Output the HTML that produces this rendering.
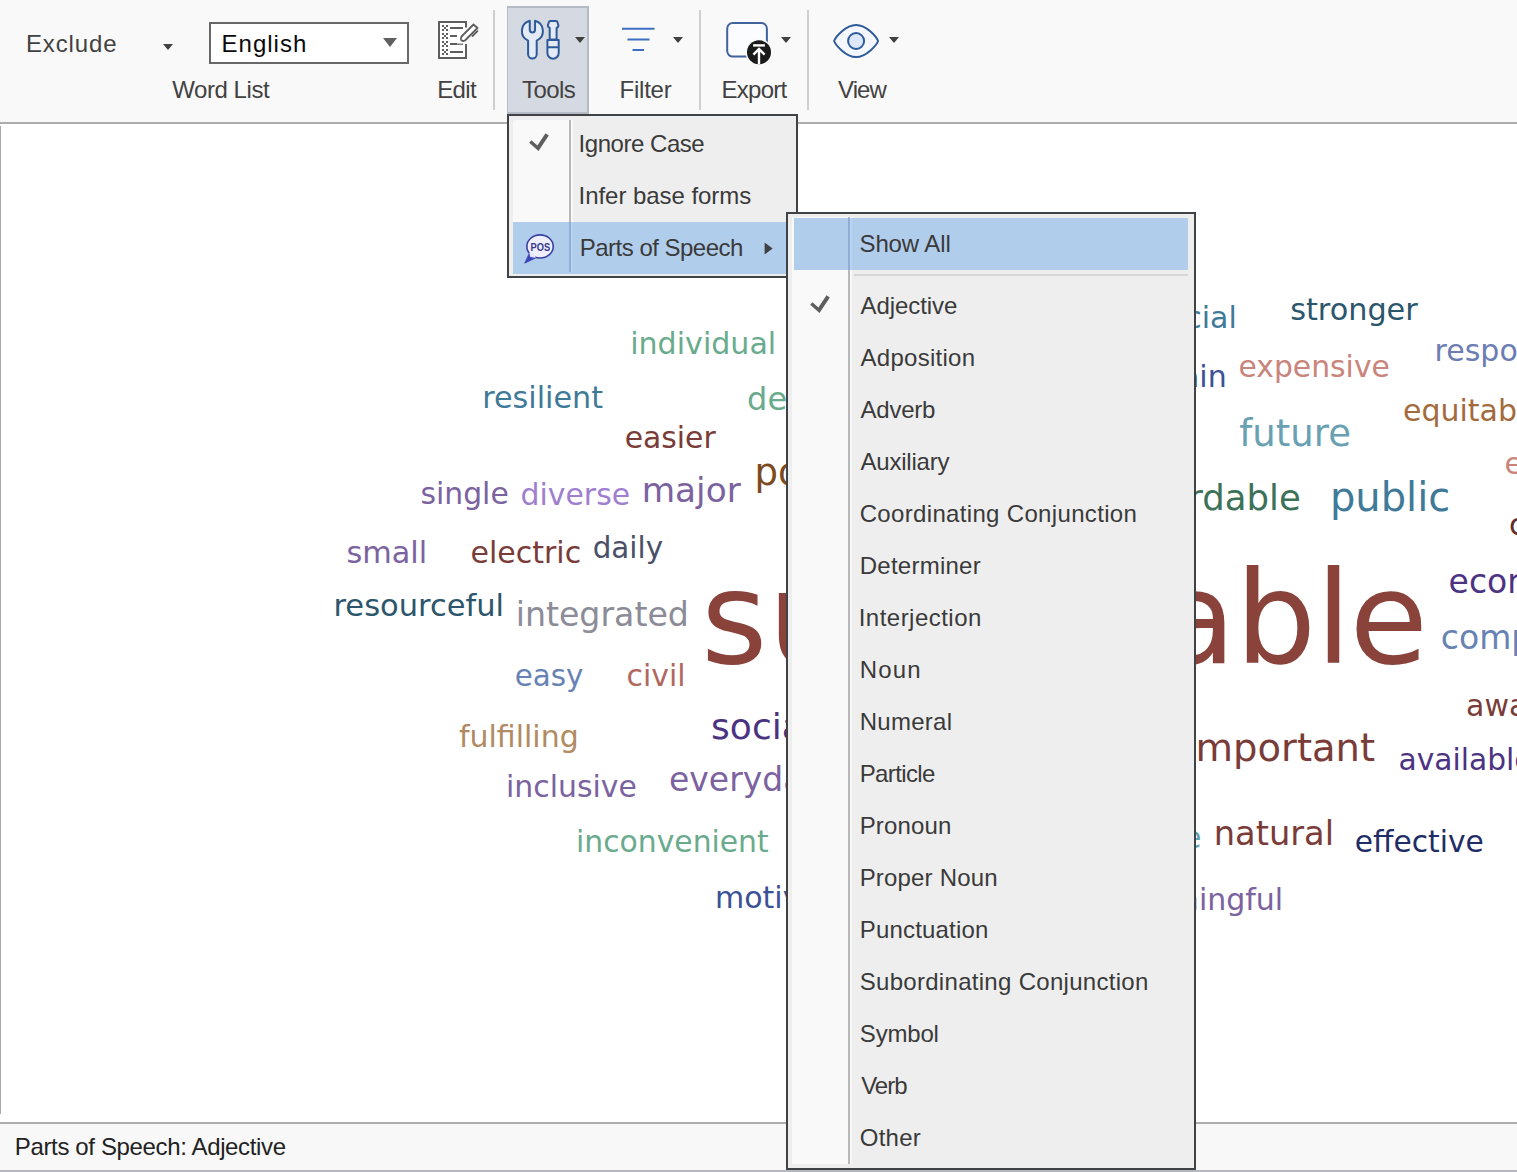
<!DOCTYPE html>
<html lang="en">
<head>
<meta charset="utf-8">
<title>Word Cloud - Parts of Speech</title>
<style>
*{box-sizing:border-box;margin:0;padding:0}
html,body{width:1517px;height:1172px;overflow:hidden;background:#fff}
body{position:relative;font-family:"Liberation Sans",sans-serif;font-size:24px;color:#3c3c3c}
.t{position:absolute;white-space:nowrap;line-height:30px;height:30px;font-size:24px;display:block}
svg{position:absolute;overflow:visible}
#toolbar{position:absolute;left:0;top:0;width:1517px;height:122px;background:#f9f9f9}
#tbline{position:absolute;left:0;top:122px;width:1517px;height:2px;background:#adadad}
.sep{position:absolute;top:10px;width:2px;height:100px;background:#cfcfcf}
.arr{position:absolute;width:0;height:0;border-left:5px solid transparent;border-right:5px solid transparent;border-top:6px solid #404040}
#combo{position:absolute;left:209px;top:22px;width:200px;height:42px;border:2px solid #686868;background:#fff}
#comboarr{position:absolute;left:383px;top:38px;width:0;height:0;border-left:7.5px solid transparent;border-right:7.5px solid transparent;border-top:9px solid #606060}
#toolsbtn{position:absolute;left:507px;top:6px;width:82px;height:108px;background:#d5d9e1;border:2px solid #b4bac6;border-left-width:1.5px}
#canvas{position:absolute;left:0;top:124px;width:1517px;height:998px;background:#fff;overflow:hidden}
#cloud{left:0;top:-124px;width:1517px;height:1172px;font-family:"DejaVu Sans",sans-serif}
#leftline{position:absolute;left:0;top:126px;width:1px;height:988px;background:#a8a8a8}
#status{position:absolute;left:0;top:1122px;width:1517px;height:48px;background:#f8f8f8;border-top:2px solid #adadad}
#bottomstrip{position:absolute;left:0;top:1170px;width:1517px;height:2px;background:#b4b6c0}
.menu{position:absolute;background:#eeeeee;border:2px solid #404346}
.menu ul{list-style:none}
.menu li{position:absolute;color:#3a3a3a}
.menu li svg{position:absolute}
.menu .col{position:absolute;background:#f9f9f9}
.menu .vsep{position:absolute;width:4.3px;background:#f8f8f8;border-left:2px solid #b8b8b8}
.menu li.hl{background:#b1cdec}
.hl .vs{position:absolute;top:0;bottom:0;width:4.3px;background:#b9d4f3;border-left:2px solid #8fadd5}
.hsep{position:absolute;height:2px;background:#d6d6d6}
</style>
</head>
<body>
<div id="toolbar"><span class="t" style="left:25.90px;top:29.00px;letter-spacing:0.877px;color:#424242">Exclude</span><div class="arr" style="left:163px;top:44px"></div><div id="combo"></div><span class="t" style="left:221.50px;top:29.00px;letter-spacing:1.022px;color:#0a0a0a">English</span><div id="comboarr"></div><span class="t" style="left:172.20px;top:75.00px;letter-spacing:-0.432px;color:#424242">Word List</span><svg id="ic-edit" style="left:430px;top:12px" width="60" height="56" viewBox="430 12 60 56">
<path d="M466,27.5V22H439V58H466V44" fill="#fff" stroke="#5e5e5e" stroke-width="2"/>
<g fill="#5e5e5e"><rect x="442" y="25" width="2" height="2"/><rect x="446" y="25" width="2" height="2"/><rect x="444" y="27" width="2" height="2"/><rect x="442" y="29" width="2" height="2"/><rect x="446" y="29" width="2" height="2"/><rect x="442" y="33" width="2" height="2"/><rect x="446" y="33" width="2" height="2"/><rect x="444" y="35" width="2" height="2"/><rect x="442" y="37" width="2" height="2"/><rect x="446" y="37" width="2" height="2"/><rect x="442" y="41" width="2" height="2"/><rect x="446" y="41" width="2" height="2"/><rect x="444" y="43" width="2" height="2"/><rect x="442" y="45" width="2" height="2"/><rect x="446" y="45" width="2" height="2"/><rect x="442" y="49" width="2" height="2"/><rect x="446" y="49" width="2" height="2"/><rect x="444" y="51" width="2" height="2"/><rect x="442" y="53" width="2" height="2"/><rect x="446" y="53" width="2" height="2"/><rect x="450" y="27" width="13" height="2"/><rect x="450" y="35" width="7" height="2"/><rect x="450" y="43" width="7" height="2"/><rect x="456" y="43.6" width="7" height="1.2"/><rect x="450" y="51" width="13" height="2"/>
</g>
<path d="M461.5,36.5 L473.5,24.5 L477.5,28 L465,40.5 Q462.5,41.6 461.2,40.2 Q460.3,38.6 461.5,36.5Z" fill="#fff" stroke="#5e5e5e" stroke-width="1.8" stroke-linejoin="round"/>
<path d="M472.5,36 L477.5,31.2" stroke="#5e5e5e" stroke-width="1.8" stroke-linecap="round"/>
</svg><span class="t" style="left:437.20px;top:75.00px;letter-spacing:-0.629px;color:#424242">Edit</span><div class="sep" style="left:493px"></div><div id="toolsbtn"></div><svg id="ic-tools" style="left:510px;top:10px" width="85" height="60" viewBox="510 10 85 60">
<path d="M529.75,20.84 A10.5,10.5 0 0 0 528.1,40.58 V54.3 A4.3,4.3 0 0 0 536.7,54.3 V40.58 A10.5,10.5 0 0 0 535.05,20.84 V29.85 A2.65,2.65 0 0 1 529.75,29.85 Z" fill="#e4ebf7" stroke="#2d5a98" stroke-width="2" stroke-linejoin="round"/>
<path d="M550.5,21 H555.8 Q557.2,21 557.5,22.3 L558.4,25.3 Q558.6,26.6 557.4,27.4 L556.6,28 V39.5 H549.7 V28 L548.9,27.4 Q547.7,26.6 547.9,25.3 L548.8,22.3 Q549.1,21 550.5,21Z" fill="#e4ebf7" stroke="#2d5a98" stroke-width="2" stroke-linejoin="round"/>
<path d="M547.4,40 H558.7 V53 A5.65,5.65 0 0 1 547.4,53 Z M547.4,47.3 H558.7" fill="#e4ebf7" stroke="#2d5a98" stroke-width="2" stroke-linejoin="round"/>
</svg><div class="arr" style="left:575px;top:37px"></div><span class="t" style="left:522.00px;top:75.00px;letter-spacing:-0.582px;color:#424242">Tools</span><svg id="ic-filter" style="left:615px;top:20px" width="50" height="40" viewBox="615 20 50 40">
<path d="M622,28.7H654.5M627.5,39.4H649.5M632.5,50H644" stroke="#3c6fc0" stroke-width="2" fill="none"/>
</svg><div class="arr" style="left:673px;top:37px"></div><span class="t" style="left:619.60px;top:75.00px;letter-spacing:-0.248px;color:#424242">Filter</span><div class="sep" style="left:699px"></div><svg id="ic-export" style="left:715px;top:10px" width="85" height="60" viewBox="715 10 85 60">
<rect x="727.2" y="23" width="39.7" height="33.6" rx="5.5" fill="#fafcff" stroke="#41639c" stroke-width="2"/>
<circle cx="759" cy="52.3" r="13.4" fill="#f9f9f9"/>
<circle cx="759" cy="52.3" r="12" fill="#1a1a1a"/>
<path d="M753.1,45.4H764.9" stroke="#fff" stroke-width="2.4"/>
<path d="M759,49V64.3M753.4,54.6L759,49L764.6,54.6" stroke="#fff" stroke-width="2.4" fill="none"/>
</svg><div class="arr" style="left:781px;top:37px"></div><span class="t" style="left:721.50px;top:75.00px;letter-spacing:-0.739px;color:#424242">Export</span><div class="sep" style="left:807px"></div><svg id="ic-view" style="left:825px;top:10px" width="85" height="60" viewBox="825 10 85 60">
<path d="M834.1,41 C835.6,37.2 845.5,25 856.1,25 C866.7,25 876.6,37.2 878.1,41 C876.6,44.8 866.7,57 856.1,57 C845.5,57 835.6,44.8 834.1,41Z" fill="#f4f8fe" stroke="#2d5a98" stroke-width="2" stroke-linejoin="round"/>
<circle cx="856.1" cy="41" r="8" fill="#dde7f7" stroke="#2d5a98" stroke-width="2"/>
</svg><div class="arr" style="left:889px;top:37px"></div><span class="t" style="left:838.00px;top:75.00px;letter-spacing:-0.918px;color:#424242">View</span></div>
<div id="tbline"></div>
<div id="canvas"><svg id="cloud" viewBox="0 0 1517 1172">
<text x="630.2" y="353.9" font-size="30.1" fill="#6aab8e">individual</text>
<text x="482.3" y="407.8" font-size="30.2" fill="#3f7a99">resilient</text>
<text x="747.1" y="410.3" font-size="32.0" fill="#6aab8e">dependent</text>
<text x="624.7" y="447.5" font-size="29.8" fill="#7a3c38">easier</text>
<text x="754.6" y="484.6" font-size="37.0" fill="#7c4a1e">positive</text>
<text x="420.5" y="503.7" font-size="29.8" fill="#7b639f">single</text>
<text x="520.5" y="505.0" font-size="29.9" fill="#a07fd0">diverse</text>
<text x="641.7" y="502.4" font-size="34.3" fill="#7b639f">major</text>
<text x="346.5" y="563.0" font-size="30.3" fill="#7b639f">small</text>
<text x="470.5" y="563.0" font-size="30.0" fill="#7a3c38">electric</text>
<text x="592.7" y="557.5" font-size="29.4" fill="#4a5068">daily</text>
<text x="333.5" y="615.5" font-size="30.5" fill="#2b566b">resourceful</text>
<text x="515.7" y="626.2" font-size="33.2" fill="#8c8c98">integrated</text>
<text x="701.1" y="663.2" font-size="127.6" fill="#89433b" letter-spacing="-0.52" dx="0 1 0 0 0 0 0 0.8 0 0 -1.3">sustainable</text>
<text x="514.7" y="686.2" font-size="29.4" fill="#6783b4">easy</text>
<text x="626.5" y="685.5" font-size="29.9" fill="#b0685f">civil</text>
<text x="458.9" y="747.0" font-size="30.0" fill="#b08b63">fulfilling</text>
<text x="711.1" y="738.6" font-size="36.0" fill="#4b3382">social</text>
<text x="506.0" y="796.7" font-size="29.9" fill="#7b639f">inclusive</text>
<text x="669.0" y="790.5" font-size="33.0" fill="#7b639f">everyday</text>
<text x="576.0" y="851.5" font-size="29.8" fill="#6aab8e">inconvenient</text>
<text x="715.0" y="907.8" font-size="30.0" fill="#3b5296">motivated</text>
<text x="1236.8" y="327.5" font-size="30.0" fill="#3f7a99" text-anchor="end">crucial</text>
<text x="1290.2" y="319.5" font-size="30.3" fill="#2b566b">stronger</text>
<text x="1226.7" y="387.0" font-size="30.0" fill="#3b5296" text-anchor="end">certain</text>
<text x="1238.5" y="377.0" font-size="29.8" fill="#c9847c">expensive</text>
<text x="1434.6" y="361.3" font-size="30.0" fill="#6c7db3">responsible</text>
<text x="1403.0" y="421.4" font-size="30.0" fill="#a36b3c">equitable</text>
<text x="1239.3" y="446.2" font-size="37.0" fill="#69a1b3">future</text>
<text x="1504.5" y="474.0" font-size="30.0" fill="#c9847c">essential</text>
<text x="1300.8" y="510.0" font-size="35.5" fill="#3d7259" text-anchor="end">affordable</text>
<text x="1329.9" y="510.5" font-size="40.0" fill="#3f7a99">public</text>
<text x="1509.0" y="535.0" font-size="30.0" fill="#632d2d">clean</text>
<text x="1448.6" y="592.9" font-size="33.0" fill="#4b3382">economic</text>
<text x="1440.8" y="648.7" font-size="33.0" fill="#6783b4">competitive</text>
<text x="1466.1" y="715.5" font-size="30.0" fill="#7a3c38">aware</text>
<text x="1375.1" y="761.2" font-size="38.5" fill="#7a3c38" text-anchor="end">important</text>
<text x="1398.5" y="769.7" font-size="29.7" fill="#4b3382">available</text>
<text x="1201.4" y="847.5" font-size="30.0" fill="#5fa0b0" text-anchor="end">reliable</text>
<text x="1213.7" y="845.0" font-size="33.7" fill="#7a3c38">natural</text>
<text x="1354.7" y="851.7" font-size="29.7" fill="#1f2d66">effective</text>
<text x="1283.2" y="910.0" font-size="30.0" fill="#7b639f" text-anchor="end">meaningful</text>
</svg></div>
<div id="leftline"></div>
<div id="status"></div><span class="t" style="left:14.80px;top:1132.00px;letter-spacing:-0.357px;color:#222222">Parts of Speech: Adjective</span><div id="bottomstrip"></div>
<div class="menu" id="toolsmenu" style="left:507px;top:114px;width:291px;height:164px"><div class="col" style="left:3.5px;top:4px;width:56px;height:154px;border-radius:3px 0 0 0"></div><div class="vsep" style="left:59.5px;top:4px;height:152px"></div><ul>
<li style="left:3.5px;top:2px;width:283px;height:52px"><svg class="chk" width="50" height="40" viewBox="515 122 50 40" style="left:2.5px;top:4.0px"><path d="M529.2,142.8L531.4,140.3L537.4,145.5L545.5,133.3L548.8,135.5L538.5,151Z" fill="#5e5e5e"/></svg><span class="t" style="left:66.10px;top:11.00px;letter-spacing:-0.470px">Ignore Case</span></li>
<li style="left:3.5px;top:54px;width:283px;height:52px"><span class="t" style="left:66.10px;top:11.00px;letter-spacing:-0.053px">Infer base forms</span></li>
<li class="hl" style="left:3.5px;top:106px;width:283px;height:52px"><div class="vs" style="left:56px;bottom:2px"></div><svg id="ic-pos" width="40" height="40" viewBox="520 228 40 40" style="left:7.5px;top:6.0px">
<path d="M524.7,263.2 L529.2,253.6 L535.6,258 Z" fill="#3b45b8" stroke="#3b45b8" stroke-width="0.8" stroke-linejoin="round"/>
<ellipse cx="540.05" cy="246.45" rx="13.2" ry="11.6" fill="#efeefc" stroke="#3a3f9f" stroke-width="1.6"/>
<path d="M529.9,252.9 L535.3,257.2 L530.6,256.6 Z" fill="#efeefc" stroke="#efeefc" stroke-width="1"/>
<text x="530.6" y="250.7" style="font:bold 10.8px 'Liberation Sans',sans-serif" fill="#36398f" textLength="19.6" lengthAdjust="spacingAndGlyphs">POS</text>
</svg><svg class="sub" width="16" height="18" viewBox="760 240 16 18" style="left:247.5px;top:18px"><path d="M764.6,242.4V254.6L772.6,248.5Z" fill="#404040"/></svg><span class="t" style="left:67.30px;top:11.00px;letter-spacing:-0.516px">Parts of Speech</span></li>
</ul></div>
<div class="menu" id="posmenu" style="left:786px;top:212px;width:410px;height:958px"><div class="col" style="left:4px;top:3px;width:56px;height:946.5px"></div><div class="vsep" style="left:60px;top:3px;height:946.5px"></div><div class="hsep" style="left:65.5px;top:60px;width:334.5px"></div><ul>
<li class="hl" style="left:6px;top:4px;width:394px;height:51.7px"><div class="vs" style="left:54px"></div><span class="t" style="left:65.50px;top:11.00px;letter-spacing:-0.120px">Show All</span></li>
<li style="left:6px;top:66px;width:394px;height:52px"><svg class="chk" width="50" height="40" viewBox="515 122 50 40" style="left:1.7px;top:4.0px"><path d="M529.2,142.8L531.4,140.3L537.4,145.5L545.5,133.3L548.8,135.5L538.5,151Z" fill="#5e5e5e"/></svg><span class="t" style="left:66.50px;top:11.00px;letter-spacing:-0.067px">Adjective</span></li>
<li style="left:6px;top:118px;width:394px;height:52px"><span class="t" style="left:66.50px;top:11.00px;letter-spacing:0.274px">Adposition</span></li>
<li style="left:6px;top:170px;width:394px;height:52px"><span class="t" style="left:66.50px;top:11.00px;letter-spacing:-0.239px">Adverb</span></li>
<li style="left:6px;top:222px;width:394px;height:52px"><span class="t" style="left:66.50px;top:11.00px;letter-spacing:-0.211px">Auxiliary</span></li>
<li style="left:6px;top:274px;width:394px;height:52px"><span class="t" style="left:65.70px;top:11.00px;letter-spacing:0.332px">Coordinating Conjunction</span></li>
<li style="left:6px;top:326px;width:394px;height:52px"><span class="t" style="left:65.70px;top:11.00px;letter-spacing:0.255px">Determiner</span></li>
<li style="left:6px;top:378px;width:394px;height:52px"><span class="t" style="left:64.70px;top:11.00px;letter-spacing:0.477px">Interjection</span></li>
<li style="left:6px;top:430px;width:394px;height:52px"><span class="t" style="left:65.70px;top:11.00px;letter-spacing:1.158px">Noun</span></li>
<li style="left:6px;top:482px;width:394px;height:52px"><span class="t" style="left:65.70px;top:11.00px;letter-spacing:0.273px">Numeral</span></li>
<li style="left:6px;top:534px;width:394px;height:52px"><span class="t" style="left:65.70px;top:11.00px;letter-spacing:-0.626px">Particle</span></li>
<li style="left:6px;top:586px;width:394px;height:52px"><span class="t" style="left:65.70px;top:11.00px;letter-spacing:0.152px">Pronoun</span></li>
<li style="left:6px;top:638px;width:394px;height:52px"><span class="t" style="left:65.70px;top:11.00px;letter-spacing:0.177px">Proper Noun</span></li>
<li style="left:6px;top:690px;width:394px;height:52px"><span class="t" style="left:65.70px;top:11.00px;letter-spacing:0.189px">Punctuation</span></li>
<li style="left:6px;top:742px;width:394px;height:52px"><span class="t" style="left:65.70px;top:11.00px;letter-spacing:0.297px">Subordinating Conjunction</span></li>
<li style="left:6px;top:794px;width:394px;height:52px"><span class="t" style="left:65.80px;top:11.00px;letter-spacing:-0.179px">Symbol</span></li>
<li style="left:6px;top:846px;width:394px;height:52px"><span class="t" style="left:67.20px;top:11.00px;letter-spacing:-1.008px">Verb</span></li>
<li style="left:6px;top:898px;width:394px;height:52px"><span class="t" style="left:65.80px;top:11.00px;letter-spacing:0.217px">Other</span></li>
</ul></div>
</body>
</html>
